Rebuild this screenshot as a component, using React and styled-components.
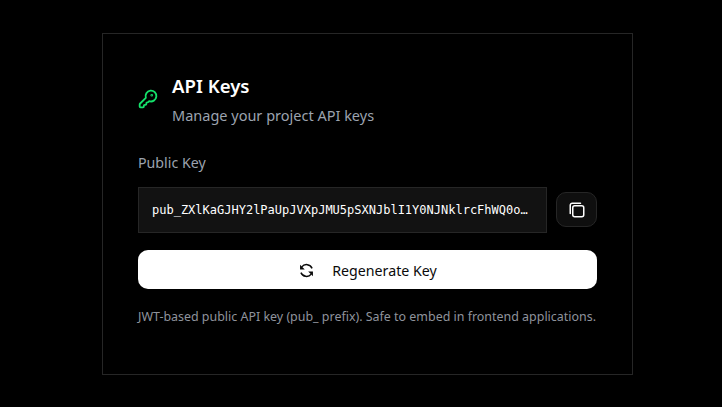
import React from "react"
import styled, { createGlobalStyle } from "styled-components"
import { KeyRound } from "lucide-react"

const GlobalStyle = createGlobalStyle`
  html, body {
    margin: 0;
    background: #000;
  }
`

const Page = styled.div`
  width: 722px;
  height: 407px;
  padding: 33px 0 0 102px;
  box-sizing: border-box;
  font-family: "Noto Sans", "Open Sans", sans-serif;
`

const Card = styled.section`
  width: 531px;
  height: 342px;
  box-sizing: border-box;
  border: 1px solid #262626;
  padding: 38px 35px 0;
`

const Header = styled.header`
  display: flex;
  align-items: center;
  gap: 14px;
  margin-bottom: 28px;
`

const KeyIcon = styled(KeyRound)`
  width: 20px;
  height: 20px;
  color: #14e26b;
`

const Title = styled.h1`
  margin: 0 0 5px;
  font-size: 18.6px;
  line-height: 28px;
  font-weight: 600;
  color: #fff;
`

const Subtitle = styled.p`
  margin: 0;
  font-size: 14.5px;
  line-height: 20px;
  color: #9ca3af;
`

const Label = styled.div`
  font-size: 14.2px;
  line-height: 20px;
  color: #9ca3af;
  margin-bottom: 14px;
`

const KeyRow = styled.div`
  display: flex;
  align-items: flex-start;
  gap: 9px;
  margin-bottom: 17px;
`

const KeyField = styled.div`
  flex: 1;
  min-width: 0;
  height: 46px;
  box-sizing: border-box;
  border: 1px solid #262626;
  background: #121212;
  padding: 0 13px;
  display: flex;
  align-items: center;
  font-family: "DejaVu Sans Mono", monospace;
  font-size: 12px;
  color: #fff;
`

const KeyText = styled.span`
  overflow: hidden;
  white-space: nowrap;
  text-overflow: ellipsis;
`

const CopyButton = styled.button`
  width: 41px;
  height: 35px;
  flex: none;
  margin-top: 5px;
  padding: 0;
  display: flex;
  align-items: center;
  justify-content: center;
  border: 1px solid #262626;
  border-radius: 10px;
  background: #0f0f0f;
  color: #fff;
`

const RegenerateButton = styled.button`
  width: 100%;
  height: 39px;
  padding: 1px 0 0 1px;
  display: flex;
  align-items: center;
  justify-content: center;
  gap: 18px;
  border: none;
  border-radius: 10px;
  background: #fff;
  color: #0a0a0a;
  font-family: inherit;
  font-size: 14.2px;
  margin-bottom: 18px;
`

const Note = styled.p`
  margin: 0;
  font-size: 12.45px;
  line-height: 20px;
  white-space: nowrap;
  color: #8f939c;
`

const CopyGlyph = () => (
  <svg width="16" height="16" viewBox="0 0 16 16" fill="none" stroke="currentColor" strokeWidth="1.5" strokeLinecap="round">
    <rect x="3.75" y="3.75" width="11" height="11" rx="2" />
    <path d="M1.25 11.5V3.25a2 2 0 0 1 2-2h8.25" />
  </svg>
)

const RefreshGlyph = () => (
  <svg width="15" height="15" viewBox="0 0 14 14" fill="none" stroke="#0a0a0a" strokeWidth="1.4">
    <path d="M12.2 5A5.6 5.6 0 0 0 2.6 3.6" />
    <path d="M1.8 9a5.6 5.6 0 0 0 9.6 1.4" />
    <path d="M1 1.6V6h4.4z" fill="#0a0a0a" stroke="none" />
    <path d="M13 12.4V8H8.6z" fill="#0a0a0a" stroke="none" />
  </svg>
)

const API_KEY = "pub_ZXlKaGJHY2lPaUpJVXpJMU5pSXNJblI1Y0NJNklrcFhWQ0o"

const App = () => {
  return (
    <Page>
      <GlobalStyle />
      <Card>
        <Header>
          <KeyIcon strokeWidth={2.2} />
          <div>
            <Title>API Keys</Title>
            <Subtitle>Manage your project API keys</Subtitle>
          </div>
        </Header>
        <Label>Public Key</Label>
        <KeyRow>
          <KeyField>
            <KeyText>{API_KEY}…</KeyText>
          </KeyField>
          <CopyButton>
            <CopyGlyph />
          </CopyButton>
        </KeyRow>
        <RegenerateButton>
          <RefreshGlyph />
          Regenerate Key
        </RegenerateButton>
        <Note>JWT-based public API key (pub_ prefix). Safe to embed in frontend applications.</Note>
      </Card>
    </Page>
  )
}

export default App
